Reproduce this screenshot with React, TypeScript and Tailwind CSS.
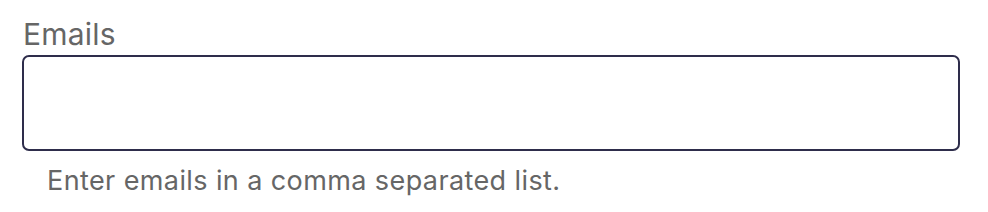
export default function App() {
  return (
    <div className="bg-white w-[988px] h-[212px] font-['Inter',sans-serif]">
      <div className="pl-[22px] pr-[28px] pt-[16px]">
        <label htmlFor="emails" className="block pl-[1px] text-[30px] leading-[36px] tracking-[0.2px] text-[#666666]">
          Emails
        </label>
        <input
          id="emails"
          type="text"
          className="mt-[3px] block w-full h-[96px] rounded-[7px] border-2 border-[#2e2d4b] bg-white outline-none"
        />
        <p className="mt-[14px] pl-[25px] text-[27px] leading-[32px] tracking-[0.4px] text-[#666666]">
          Enter emails in a comma separated list.
        </p>
      </div>
    </div>
  );
}
